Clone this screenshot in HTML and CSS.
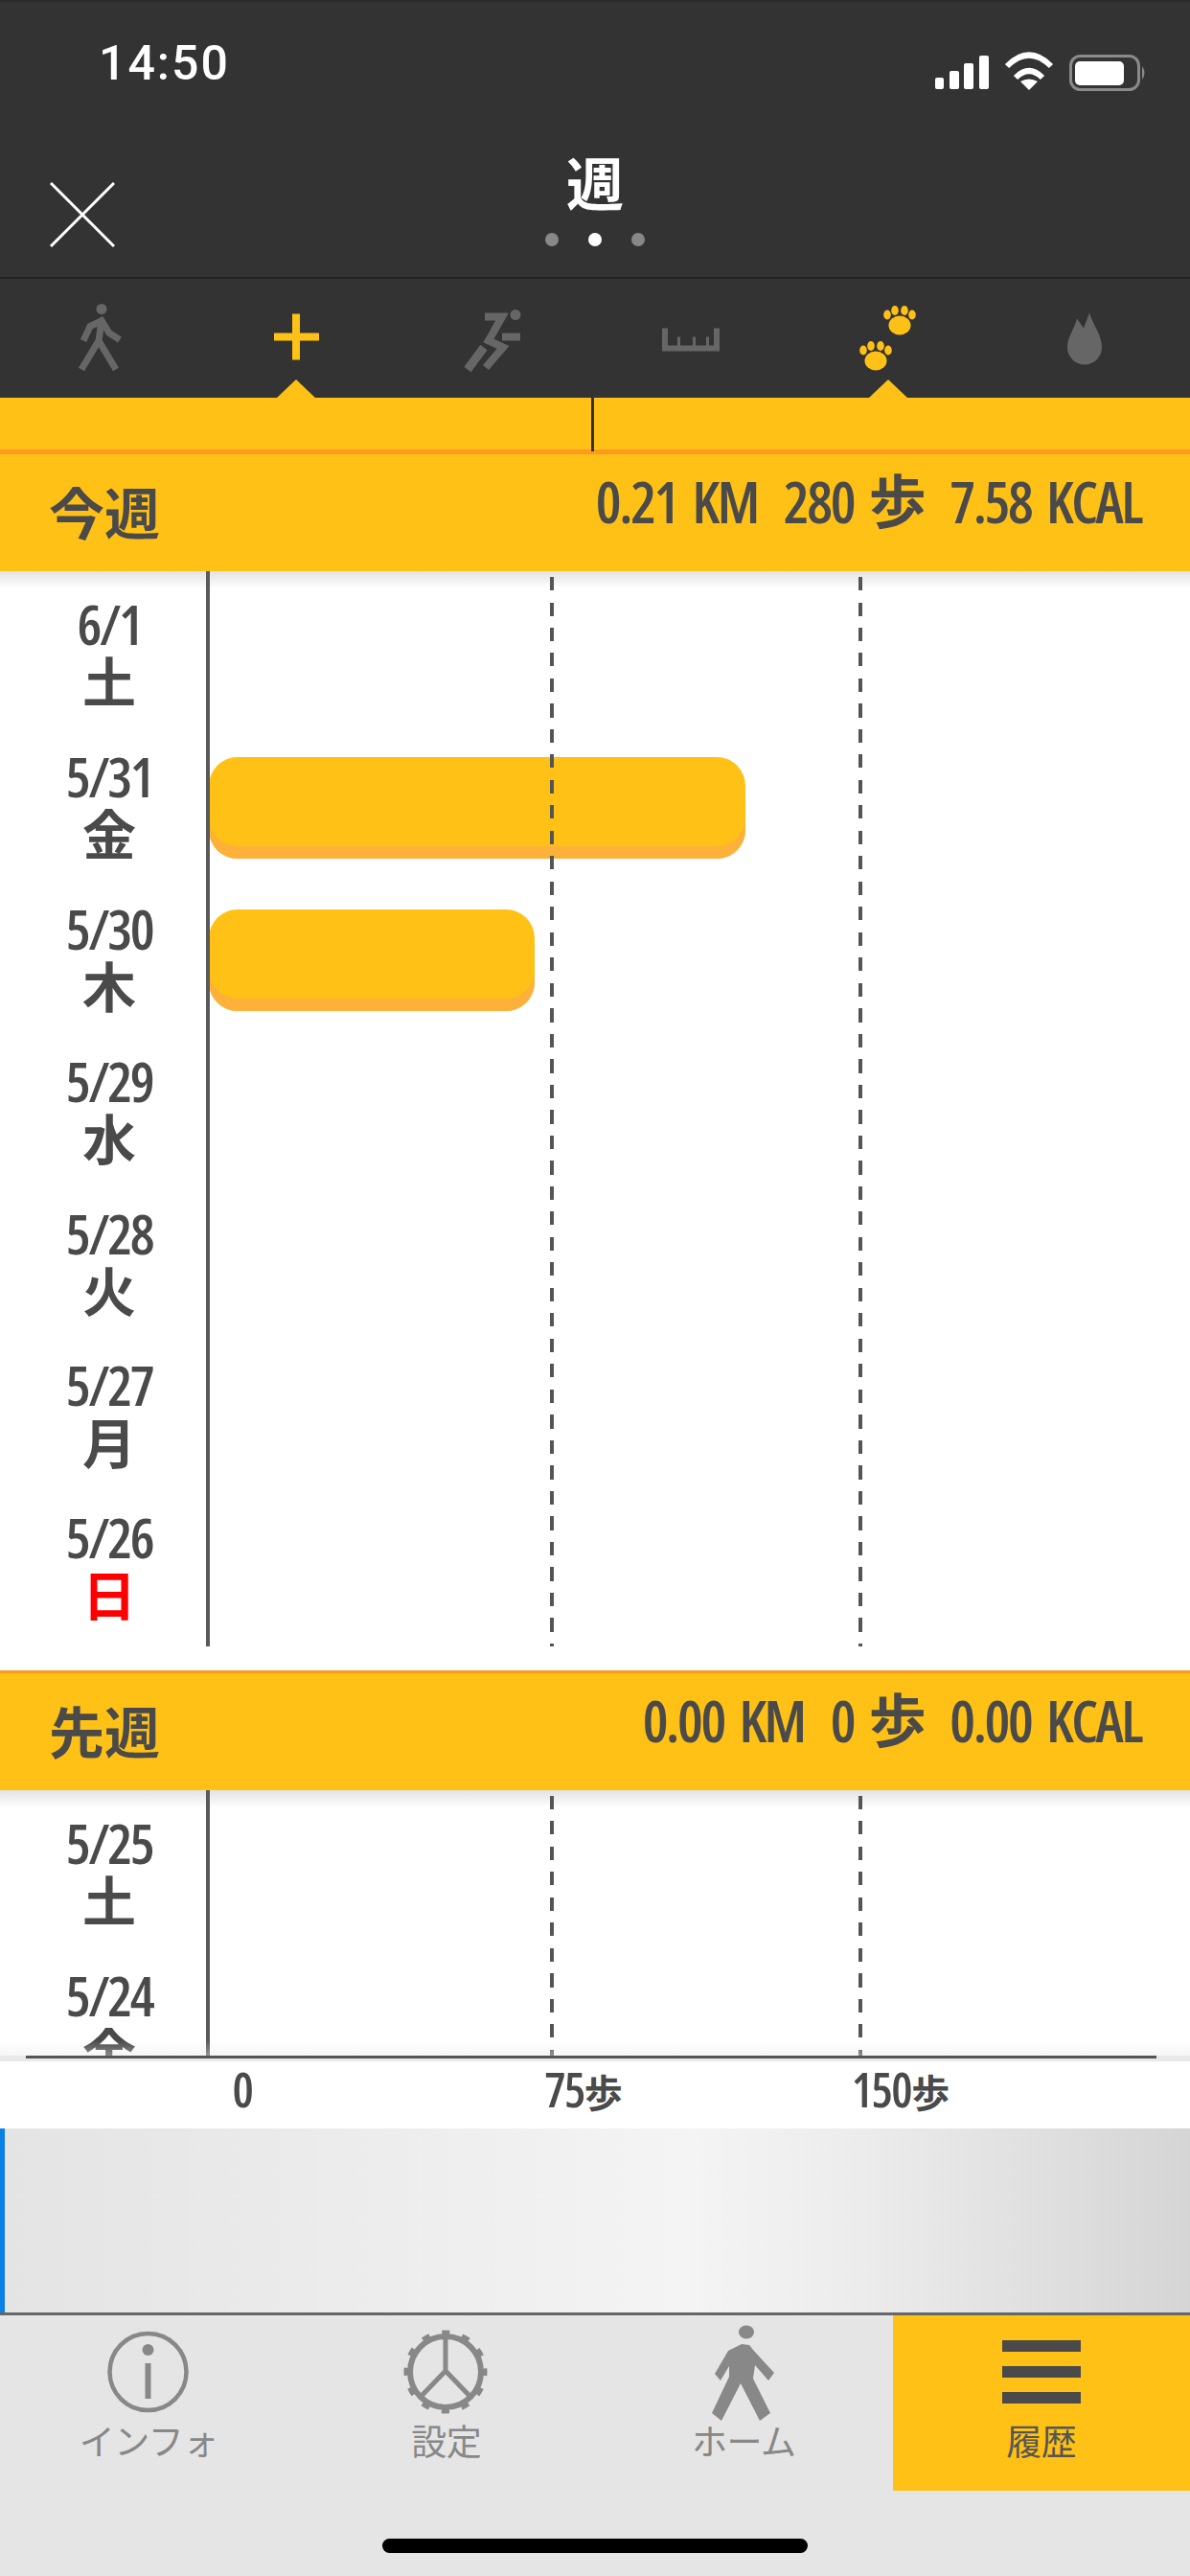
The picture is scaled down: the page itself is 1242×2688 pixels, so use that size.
FILE: index.html
```html
<!doctype html>
<html lang="ja">
<head>
<meta charset="utf-8">
<title>週</title>
<link rel="stylesheet" href="styles.css">
</head>
<body>
<div class="app">
  <header class="top">
    <div class="status">
      <span class="time">14:50</span>
      <svg class="status-icons" viewBox="960 40 240 70">
        <g fill="#fff">
          <rect x="974" y="81" width="9" height="12" rx="2"/>
          <rect x="989" y="74" width="10" height="19" rx="2"/>
          <rect x="1004" y="66" width="10" height="27" rx="2"/>
          <rect x="1020" y="58" width="10" height="35" rx="2"/>
          <path d="M1072 94 L1063 85 Q1072 80 1081 85 Z"/>
        </g>
        <g fill="none" stroke="#fff">
          <path d="M1058 81 Q1072 67 1086 81" stroke-width="6"/>
          <path d="M1049 69 Q1072 46 1095 69" stroke-width="6"/>
        </g>
        <rect x="1115.5" y="58.5" width="71" height="35" rx="10" fill="none" stroke="#8a8a8a" stroke-width="3"/>
        <rect x="1120" y="64" width="51" height="25" rx="5" fill="#fff"/>
        <path d="M1190 69 Q1195 76 1190 83 Z" fill="#8a8a8a"/>
      </svg>
    </div>
    <div class="nav">
      <svg class="close" viewBox="0 0 68 68"><path d="M1 1 L67 67 M67 1 L1 67" stroke="#fff" stroke-width="3" fill="none"/></svg>
      <div class="nav-title">
        <h1 class="title">週</h1>
        <div class="dots"><i class="dot"></i><i class="dot on"></i><i class="dot"></i></div>
      </div>
    </div>
  </header>

  <nav class="tabs">
    <div class="tab">
      <svg class="tab-icon" viewBox="57 308.5 90 90">
        <circle cx="105" cy="323" r="5.5" fill="#666"/>
        <path d="M86 356 L93 341 L105 335 L113 348 L124 355 M105 335 L102 356 M84 386 L102 356 L120 386" fill="none" stroke="#666" stroke-width="7"/>
      </svg>
    </div>
    <div class="tab active">
      <svg class="tab-icon" viewBox="263 308.5 90 90">
        <path d="M304 328 H312 V348 H332 V356 H312 V376 H304 V356 H285 V348 H304 Z" fill="#ffc116"/>
      </svg>
    </div>
    <div class="tab">
      <svg class="tab-icon" viewBox="469 308.5 90 90">
        <circle cx="537" cy="329" r="5.5" fill="#666"/>
        <path d="M505 331 H523 L509 356 L524 363 L506 384 M523 352 H542" fill="none" stroke="#666" stroke-width="8"/>
        <path d="M504 363 L487 386" fill="none" stroke="#666" stroke-width="9"/>
      </svg>
    </div>
    <div class="tab">
      <svg class="tab-icon" viewBox="675 308.5 90 90">
        <path d="M690 343 H696 V361 H706 V352 H709 V361 H722 V352 H725 V361 H736 V352 H739 V361 H744 V343 H750 V367 H690 Z" fill="#666"/>
      </svg>
    </div>
    <div class="tab active">
      <svg class="tab-icon" viewBox="881 308.5 90 90">
        <g fill="#ffc116">
          <ellipse cx="938" cy="340" rx="11.5" ry="10"/>
          <ellipse cx="925" cy="329" rx="3.8" ry="5"/>
          <ellipse cx="933" cy="324.5" rx="3.8" ry="5"/>
          <ellipse cx="943" cy="324.5" rx="3.8" ry="5"/>
          <ellipse cx="951" cy="329" rx="3.8" ry="5"/>
          <ellipse cx="913" cy="377" rx="11.5" ry="10"/>
          <ellipse cx="900" cy="366" rx="3.8" ry="5"/>
          <ellipse cx="908" cy="361.5" rx="3.8" ry="5"/>
          <ellipse cx="918" cy="361.5" rx="3.8" ry="5"/>
          <ellipse cx="926" cy="366" rx="3.8" ry="5"/>
        </g>
      </svg>
    </div>
    <div class="tab">
      <svg class="tab-icon" viewBox="1087 308.5 90 90">
        <path d="M1123 333 L1130 343 L1136 327 C1140 340 1149 350 1149 363 C1149 373 1141 381 1131 381 C1121 381 1113 373 1113 363 C1113 352 1120 345 1123 333 Z" fill="#666"/>
      </svg>
    </div>
  </nav>

  <div class="strip"><i class="strip-tick"></i></div>

  <main class="scroll">
    <section class="week">
      <div class="band">
        <h2 class="band-title">今週</h2>
        <div class="stats"><span>0.21 KM</span><span>280 歩</span><span>7.58 KCAL</span></div>
      </div>
      <div class="chart">
        <i class="line axis"></i>
        <div class="row"><div class="day"><span class="date">6/1</span><span class="wd">土</span></div></div>
        <div class="row"><div class="day"><span class="date">5/31</span><span class="wd">金</span></div><div class="bar" style="width:560px"></div></div>
        <div class="row"><div class="day"><span class="date">5/30</span><span class="wd">木</span></div><div class="bar" style="width:340px"></div></div>
        <div class="row"><div class="day"><span class="date">5/29</span><span class="wd">水</span></div></div>
        <div class="row"><div class="day"><span class="date">5/28</span><span class="wd">火</span></div></div>
        <div class="row"><div class="day"><span class="date">5/27</span><span class="wd">月</span></div></div>
        <div class="row"><div class="day"><span class="date">5/26</span><span class="wd sun">日</span></div></div>
        <i class="line dash d1"></i><i class="line dash d2"></i>
      </div>
    </section>
    <section class="week">
      <div class="band">
        <h2 class="band-title">先週</h2>
        <div class="stats"><span>0.00 KM</span><span>0 歩</span><span>0.00 KCAL</span></div>
      </div>
      <div class="chart">
        <i class="line axis"></i>
        <div class="row"><div class="day"><span class="date">5/25</span><span class="wd">土</span></div></div>
        <div class="row"><div class="day"><span class="date">5/24</span><span class="wd">金</span></div></div>
        <i class="line dash d1"></i><i class="line dash d2"></i>
      </div>
    </section>
    <div class="scroll-end"></div>
  </main>

  <div class="scale">
    <span>0</span>
    <span>75<small>歩</small></span>
    <span>150<small>歩</small></span>
  </div>

  <div class="panel"></div>

  <footer class="tabbar">
    <div class="bt">
      <svg class="bt-icon" viewBox="95 2416 120 120">
        <circle cx="154.500" cy="2475" r="40" fill="none" stroke="#888" stroke-width="4.500"/>
        <circle cx="154.500" cy="2452" r="6" fill="#888"/>
        <rect x="151.500" y="2466" width="6" height="37" fill="#888"/>
      </svg>
      <span class="bt-label">インフォ</span>
    </div>
    <div class="bt">
      <svg class="bt-icon" viewBox="406 2416 120 120">
        <circle cx="465" cy="2475" r="37" fill="none" stroke="#888" stroke-width="6"/>
        <circle cx="465" cy="2475" r="40" fill="none" stroke="#888" stroke-width="7" stroke-dasharray="8 12.944" stroke-dashoffset="4"/>
        <path d="M465 2438 V2474 M465 2474 L438 2502 M465 2474 L492 2502" fill="none" stroke="#888" stroke-width="5"/>
      </svg>
      <span class="bt-label">設定</span>
    </div>
    <div class="bt">
      <svg class="bt-icon" viewBox="716 2416 120 120">
        <ellipse cx="779" cy="2433.500" rx="8" ry="7" fill="#888"/>
        <path d="M774 2446 L782 2447 L786 2452 L808 2476 L802 2484 L788 2468 L786 2482 L804 2518 L793 2526 L773 2487 L753 2526 L743 2518 L761 2480 L761 2469 L752 2484 L746 2477 L760 2453 Z" fill="#888"/>
      </svg>
      <span class="bt-label">ホーム</span>
    </div>
    <div class="bt current">
      <svg class="bt-icon" viewBox="1027 2416 120 120">
        <g fill="#4a4a4a">
          <rect x="1046" y="2442" width="82" height="12"/>
          <rect x="1046" y="2469" width="82" height="12"/>
          <rect x="1046" y="2496" width="82" height="12"/>
        </g>
      </svg>
      <span class="bt-label">履歴</span>
    </div>
    <i class="home-bar"></i>
  </footer>
</div>
</body>
</html>
```
FILE: styles.css
```css
* { box-sizing: border-box; }
html, body { margin: 0; padding: 0; }
body { background: #e5e5e5; font-family: "Open Sans", "Noto Sans CJK JP", sans-serif; }
h1, h2 { margin: 0; font-weight: 700; }
i { font-style: normal; display: block; }

.app { width: 1242px; height: 2688px; display: flex; flex-direction: column; overflow: hidden; }

.top { height: 291px; background: #333; border-top: 2px solid #2a2a2a; border-bottom: 2px solid #222; flex: none; }
.status { height: 108px; display: flex; justify-content: space-between; padding: 34px 40px 0 103px; }
.time { font-family: Roboto, sans-serif; font-weight: 500; font-size: 50px; line-height: 60px; color: #fff; letter-spacing: 2px; }
.status-icons { width: 240px; height: 70px; margin-top: 4px; }

.nav { height: 179px; display: grid; grid-template-columns: 1fr auto 1fr; }
.close { width: 68px; height: 68px; margin: 80px 0 0 52px; }
.nav-title { display: flex; flex-direction: column; align-items: center; padding-top: 44px; }
.title { font-family: "Noto Sans CJK JP", sans-serif; font-size: 60px; line-height: 70px; color: #fff; }
.dots { display: flex; gap: 31px; margin-top: 19px; }
.dot { width: 14px; height: 14px; border-radius: 50%; background: #888; }
.dot.on { background: #fff; }

.tabs { height: 124px; flex: none; background: #333; display: flex; padding-right: 6px; }
.tab { position: relative; flex: 1; display: flex; align-items: center; justify-content: center; }
.tab-icon { width: 90px; height: 90px; display: block; }
.tab.active::after { content: ""; position: absolute; left: 50%; bottom: 0; margin-left: -20px; width: 40px; height: 19px; background: #ffc116; clip-path: polygon(50% 0, 100% 100%, 0 100%); }

.strip { height: 56px; flex: none; background: #ffc116; border-bottom: 2px solid #ff9a1e; position: relative; }
.strip-tick { position: absolute; left: 617px; top: 0; bottom: -2px; width: 3px; background: #333; }

.scroll { height: 1680px; flex: none; overflow: hidden; position: relative; background: #fff; }
.week { padding-bottom: 25px; }
.band { height: 125px; background: #ffc116; border-top: 3px solid #ff9a1e; display: flex; align-items: center; justify-content: space-between; padding: 0 51px 0 51px; color: #4a4a4a; }
.band-title { font-family: "Noto Sans CJK JP", sans-serif; font-size: 58px; line-height: 70px; padding-bottom: 5px; }
.stats { display: flex; gap: 27px; padding-bottom: 25px; font-size: 60px; font-weight: 650; font-stretch: 75%; line-height: 70px; letter-spacing: -2.4px; word-spacing: 7px; white-space: nowrap; }

.chart { position: relative; height: 1122px; padding-top: 9px; background: linear-gradient(#e2e2e2, #fff 18px) no-repeat; }
.line { position: absolute; top: 0; bottom: 0; }
.axis { left: 215px; width: 4px; background: #5a5a5a; }
.dash { width: 4px; top: 6px; background: repeating-linear-gradient(#555 0 14px, transparent 14px 26.5px); }
.d1 { left: 574px; }
.d2 { left: 896px; }

.row { height: 158.800px; display: flex; align-items: center; color: #4a4a4a; }
.day { width: 218px; padding: 0 0 5px 10px; display: flex; flex-direction: column; align-items: center; flex: none; font-weight: 700; }
.date { font-size: 58px; font-weight: 650; font-stretch: 75%; line-height: 50px; letter-spacing: -2.4px; }
.wd { font-family: "Noto Sans CJK JP", sans-serif; font-size: 56px; line-height: 56px; margin-top: 5px; }
.sun { color: #f00; }
.bar { height: 106px; background: #ffc116; border-radius: 30px; box-shadow: inset 0 -13px 0 #fdb03a; }

.scroll-end { position: absolute; left: 0; right: 0; bottom: 0; height: 22px; background: linear-gradient(rgba(232,232,232,0), rgba(232,232,232,.4) 16px, #e8e8e8 16px); }
.scroll-end::after { content: ""; position: absolute; left: 27px; right: 35px; bottom: 3px; height: 3px; background: #555; }

.scale { height: 70px; flex: none; background: #fff; display: grid; grid-template-columns: 362px 350px 312px; padding-left: 72px; color: #4a4a4a; font-size: 50px; font-weight: 650; font-stretch: 75%; line-height: 58px; letter-spacing: -1.6px; text-align: center; }
.scale small { font-size: 40px; font-weight: 700; font-family: "Noto Sans CJK JP", sans-serif; letter-spacing: 0; }

.panel { height: 192px; flex: none; border-left: 5px solid #0a7fe6; background: linear-gradient(90deg, #e4e4e4 0, #f4f4f4 58%, #ececec 72%, #d5d5d5 100%); }

.tabbar { position: relative; flex: 1; background: #e5e5e5; border-top: 3px solid #666; display: grid; grid-template-columns: repeat(4, 1fr); align-items: start; }
.bt { height: 183px; display: flex; flex-direction: column; align-items: center; color: #888; }
.bt.current { background: #ffc116; color: #555; }
.bt-icon { width: 120px; height: 120px; display: block; }
.bt-label { font-family: "Noto Sans CJK JP", sans-serif; font-size: 37px; line-height: 46px; margin-top: -13px; letter-spacing: -.5px; }
.home-bar { position: absolute; left: 399px; top: 233px; width: 444px; height: 15px; border-radius: 8px; background: #000; }
```
